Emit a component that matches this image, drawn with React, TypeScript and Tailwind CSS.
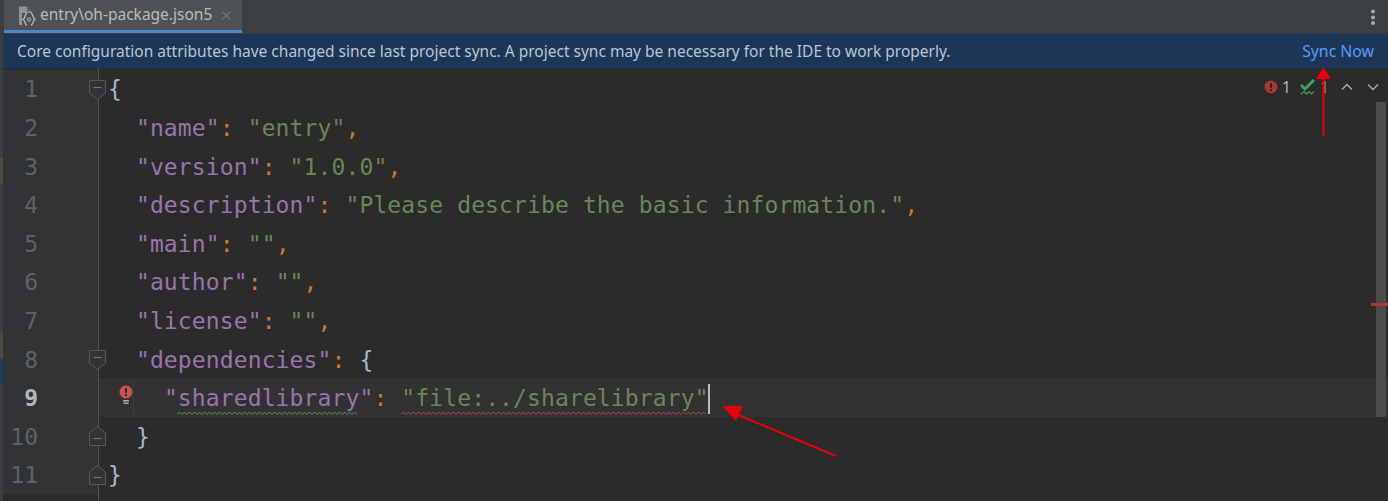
type Token = { text: string; color: string };

const KEY = "#9876aa";
const STR = "#6a8759";
const PUNCT = "#cc7832";
const BRACE = "#a9b7c6";

const key = (text: string): Token => ({ text, color: KEY });
const str = (text: string): Token => ({ text, color: STR });
const colon: Token = { text: ": ", color: PUNCT };
const comma: Token = { text: ",", color: PUNCT };
const brace = (text: string): Token => ({ text, color: BRACE });

type Line = { indent: string; tokens: Token[]; fold?: "open" | "close" };

const lines: Line[] = [
  { indent: "", tokens: [brace("{")], fold: "open" },
  { indent: "  ", tokens: [key('"name"'), colon, str('"entry"'), comma] },
  { indent: "  ", tokens: [key('"version"'), colon, str('"1.0.0"'), comma] },
  {
    indent: "  ",
    tokens: [
      key('"description"'),
      colon,
      str('"Please describe the basic information."'),
      comma,
    ],
  },
  { indent: "  ", tokens: [key('"main"'), colon, str('""'), comma] },
  { indent: "  ", tokens: [key('"author"'), colon, str('""'), comma] },
  { indent: "  ", tokens: [key('"license"'), colon, str('""'), comma] },
  { indent: "  ", tokens: [key('"dependencies"'), colon, brace("{")], fold: "open" },
  { indent: "    ", tokens: [] },
  { indent: "  ", tokens: [brace("}")], fold: "close" },
  { indent: "", tokens: [brace("}")], fold: "close" },
];

function Squiggle({ color, width }: { color: string; width: number }) {
  const points: string[] = [];
  for (let i = 0; i * 2.5 <= width; i++) {
    points.push(`${i * 2.5},${i % 2 === 0 ? 3.5 : 1}`);
  }
  return (
    <svg width={width} height={5} className="absolute left-0 top-[24px]">
      <polyline points={points.join(" ")} fill="none" stroke={color} strokeWidth="1" />
    </svg>
  );
}

function FoldMarker({ kind }: { kind: "open" | "close" }) {
  return (
    <svg width="19" height="22" viewBox="0 0 19 22">
      {kind === "open" ? (
        <path d="M1.500 1.500H17.500V14L9.500 20.500L1.500 14Z" fill="#313335" stroke="#56585a" />
      ) : (
        <path d="M1.500 20.500H17.500V8L9.500 1.500L1.500 8Z" fill="#313335" stroke="#56585a" />
      )}
      <path d={kind === "open" ? "M5.500 8.500H13.500" : "M5.500 13.500H13.500"} stroke="#77797b" />
    </svg>
  );
}

function Arrow({ d, head }: { d: string; head: string }) {
  return (
    <>
      <path d={d} stroke="#e8000d" strokeWidth="2" fill="none" />
      <polygon points={head} fill="#e8000d" />
    </>
  );
}

function JsonFileIcon() {
  return (
    <svg width="18" height="20" viewBox="0 0 18 20">
      <path d="M1 0.500H9L14 5.500V19H1Z" fill="#919497" />
      <path d="M9 0.500V5.500H14Z" fill="#5d6063" />
      <rect x="4" y="7" width="14" height="13" fill="#4e5254" />
      <path
        d="M9 7.500C6.500 7.500 7.500 12.500 5 13.500C7.500 14.500 6.500 19 9 19M13 7.500C15.500 7.500 14.500 12.500 17 13.500C14.500 14.500 15.500 19 13 19"
        fill="none"
        stroke="#b8bbbe"
        strokeWidth="1.300"
      />
      <circle cx="11" cy="13.500" r="1.700" fill="none" stroke="#b8bbbe" strokeWidth="1" />
    </svg>
  );
}

export default function App() {
  return (
    <div
      className="relative flex h-[501px] w-[1388px] overflow-hidden bg-[#2b2b2b]"
      style={{ fontFamily: '"Noto Sans", sans-serif' }}
    >
      {/* left edge of the window, with its coloured marks */}
      <div className="flex w-[3px] shrink-0 flex-col bg-[#3c3f41]">
        <div className="h-[158px]" />
        <div className="h-[26px] bg-[#4c4b40]" />
        <div className="h-[149px]" />
        <div className="h-[26px] bg-[#4c4b40]" />
        <div className="h-[25px] bg-[#1d3e5c]" />
      </div>

      <div className="min-w-0 flex-1">
        <div className="flex h-[34px] items-start bg-[#3c3f41] pl-px">
          <div className="flex h-[33px] w-[238px] items-center border-b-[3px] border-[#4a88c7] bg-[#4e5254] pl-[14px]">
            <div className="mt-[2px] flex">
              <JsonFileIcon />
            </div>
            <span className="ml-[4px] text-[15.5px] leading-none text-[#bbbbbb]">
              entry\oh-package.json5
            </span>
            <span className="ml-[8px] text-[15px] leading-none text-[#6e7173]">✕</span>
          </div>
          <svg width="6" height="16" viewBox="0 0 6 16" className="ml-auto mr-[12px] mt-[9px]">
            <circle cx="3" cy="2.500" r="2" fill="#a7a9ab" />
            <circle cx="3" cy="8.500" r="2" fill="#a7a9ab" />
            <circle cx="3" cy="14" r="2" fill="#a7a9ab" />
          </svg>
        </div>

        <div className="flex h-[34px] items-center justify-between bg-[#1d3557] pl-[14px] pr-[14px] pt-[2px] text-[15.500px] text-[#bbc5d0]">
          <span>
            Core configuration attributes have changed since last project sync. A project sync may be necessary for the IDE to work properly.
          </span>
          <span className="text-[15.8px] text-[#589df6]">Sync Now</span>
        </div>

        <div
          className="relative h-[433px] pt-[1.7px] text-[23px]"
          style={{ fontFamily: '"DejaVu Sans Mono", monospace' }}
        >
          {lines.map((line, index) => {
            const current = index === 8;
            return (
              <div
                key={index}
                className={`flex h-[38.6px] items-center leading-none ${current ? "bg-[#323232]" : ""}`}
              >
                <div
                  className={`flex h-full w-[95px] shrink-0 items-center bg-[#313335] pt-[2px] ${
                    current ? "font-bold text-[#b5b5b5]" : "text-[#606366]"
                  }`}
                >
                  <span className="w-[35px] text-right">{index + 1}</span>
                </div>
                <div className="w-[10px] shrink-0" />
                <pre
                  className="relative pt-[2px]"
                  style={{ font: "inherit", letterSpacing: "0.12px" }}
                >
                  {line.indent}
                  {line.tokens.map((token, tokenIndex) => (
                    <span key={tokenIndex} style={{ color: token.color }}>
                      {token.text}
                    </span>
                  ))}
                  {current && (
                    <>
                      <span className="relative inline-block" style={{ color: KEY }}>
                        "sharedlibrary"
                        <span className="absolute left-[13px] top-0">
                          <Squiggle color="#4f9a58" width={181} />
                        </span>
                      </span>
                      <span style={{ color: PUNCT }}>: </span>
                      <span className="relative inline-block" style={{ color: STR }}>
                        "file:../sharelibrary"
                        <span className="absolute left-0 top-0">
                          <Squiggle color="#b5484c" width={307} />
                        </span>
                        <span className="absolute left-[307px] top-[-3px] h-[30px] w-[2px] bg-[#bbbbbb]" />
                      </span>
                    </>
                  )}
                </pre>
              </div>
            );
          })}
          {/* fold line and its markers sit across the gutter edge */}
          <div className="absolute bottom-0 left-[94.500px] top-0 w-px bg-[#505254]" />
          <div className="absolute left-[85px] top-[11px]">
            <FoldMarker kind="open" />
          </div>
          <div className="absolute left-[85px] top-[281px]">
            <FoldMarker kind="open" />
          </div>
          <div className="absolute left-[85px] top-[357px]">
            <FoldMarker kind="close" />
          </div>
          <div className="absolute left-[85px] top-[396px]">
            <FoldMarker kind="close" />
          </div>
          {/* indent guide on the caret line */}
          <div className="absolute left-[129.500px] top-[311px] h-[38px] w-px bg-[#3c3c3c]" />
        </div>
      </div>

      {/* error bulb in the gutter */}
      <svg width="16" height="22" viewBox="0 0 16 22" className="absolute left-[118px] top-[385px]">
        <circle cx="8" cy="7" r="6.500" fill="#c75450" />
        <rect x="7" y="3" width="2" height="5" fill="#2b2b2b" />
        <rect x="7" y="9" width="2" height="2" fill="#2b2b2b" />
        <rect x="5" y="15" width="6" height="1.500" fill="#aaaaaa" />
        <rect x="5.500" y="17.500" width="5" height="1.500" fill="#aaaaaa" />
      </svg>

      {/* inspection widget */}
      <div className="absolute right-[9px] top-[77px] flex items-center text-[15.500px] leading-5 text-[#a9b7c6]">
        <svg width="14" height="14" viewBox="0 0 14 14">
          <circle cx="7" cy="7" r="6.500" fill="#a8383c" />
          <rect x="6" y="3" width="2" height="5" fill="#2b2b2b" />
          <rect x="6" y="9" width="2" height="2" fill="#2b2b2b" />
        </svg>
        <span className="ml-[4px] w-[8px]">1</span>
        <svg width="16" height="16" viewBox="0 0 16 16" className="ml-[10px]">
          <path d="M1 6L5 10L14 1" fill="none" stroke="#499c54" strokeWidth="3" />
          <path d="M1 15L4 12.500L6.500 15L9 12.500L11.500 15L14 12.500" fill="none" stroke="#499c54" strokeWidth="1.200" />
        </svg>
        <span className="ml-[4px] w-[8px] text-[#a9977f]">1</span>
        <svg width="12" height="8" viewBox="0 0 12 8" className="ml-[13px]">
          <path d="M1 6.500L6 1.500L11 6.500" fill="none" stroke="#a7a9ab" strokeWidth="1.500" />
        </svg>
        <svg width="12" height="8" viewBox="0 0 12 8" className="ml-[14px]">
          <path d="M1 1.500L6 6.500L11 1.500" fill="none" stroke="#a7a9ab" strokeWidth="1.500" />
        </svg>
      </div>

      {/* scrollbar with error stripe */}
      <div className="absolute left-[1376px] top-[102px] h-[315px] w-[10px] bg-[#4a4b4c]" />
      <div className="absolute left-[1371px] top-[303px] h-[3px] w-[17px] bg-[#a8383c]" />

      {/* annotation arrows */}
      <svg width="1388" height="501" className="pointer-events-none absolute left-0 top-0">
        <Arrow d="M1323.500 136V75" head="1323.500,67 1316,79 1331,79" />
        <Arrow d="M836 456L736 414" head="722,406 743,406 736,421" />
      </svg>
    </div>
  );
}
